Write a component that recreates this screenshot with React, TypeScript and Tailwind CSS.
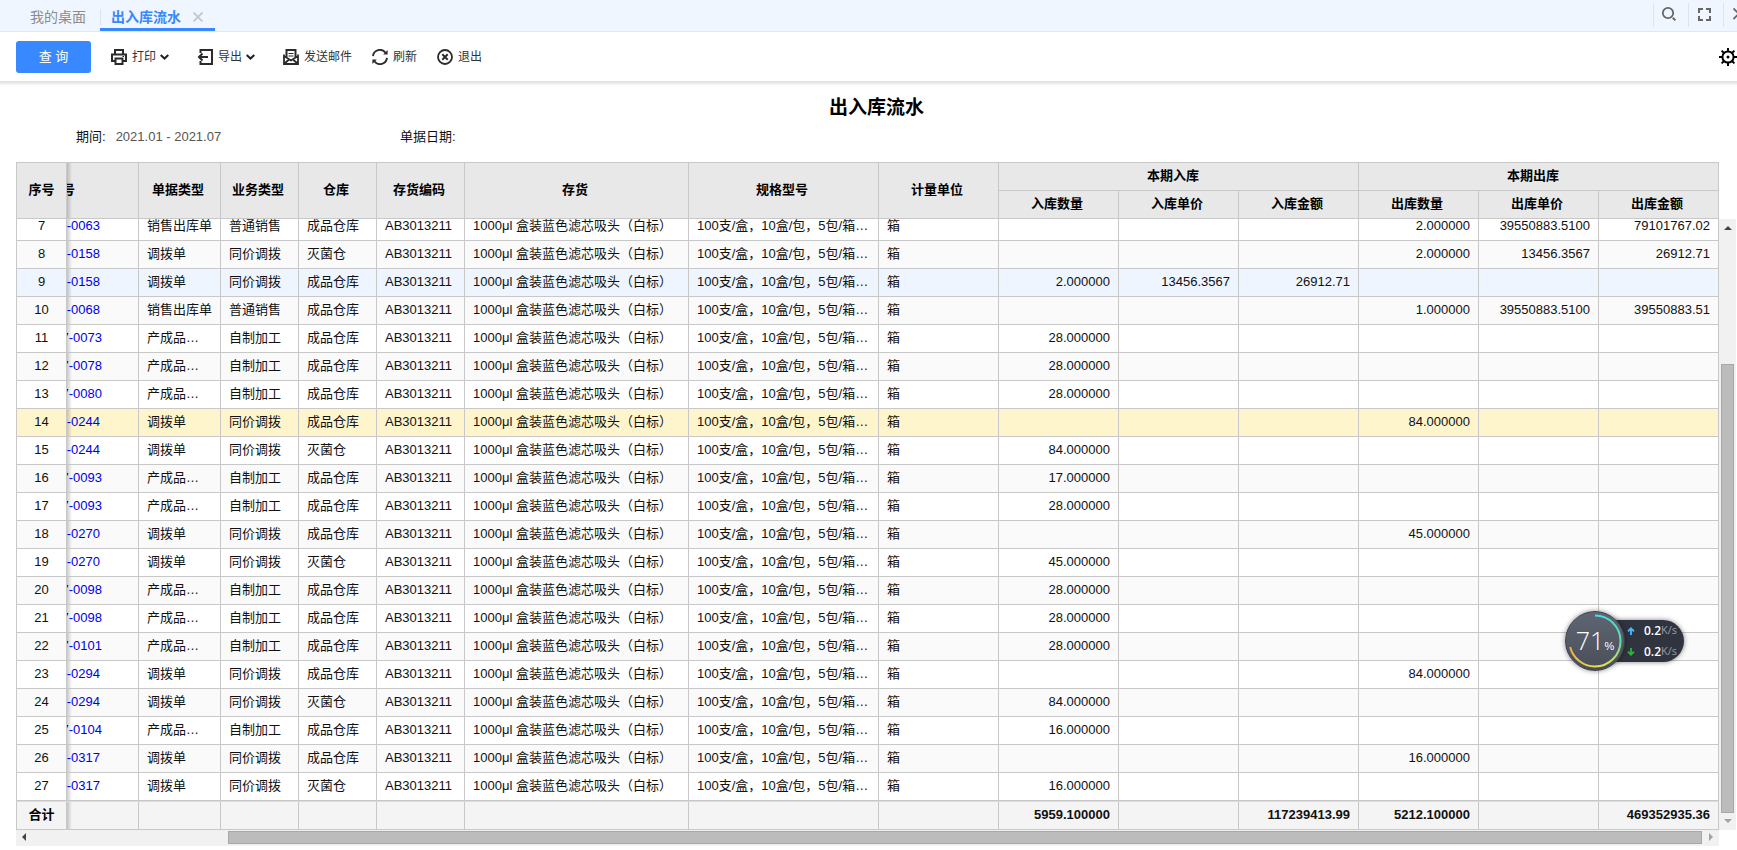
import React from "react";

type Row = {
  no: number;
  code: string;
  type: string;
  biz: string;
  store: string;
  nums: string[];
};

const SALE = ["销售出库单", "普通销售"];
const MOVE = ["调拨单", "同价调拨"];
const MADE = ["产成品入库单", "自制加工"];
const MAIN = "成品仓库";
const STERILE = "灭菌仓";

function row(no: number, code: string, kind: string[], store: string, ...nums: string[]): Row {
  return { no, code, type: kind[0], biz: kind[1], store, nums };
}

function inbound(qty: string, price = "", amount = "") {
  return [qty, price, amount, "", "", ""];
}

function outbound(qty: string, price = "", amount = "") {
  return ["", "", "", qty, price, amount];
}

const rows: Row[] = [
  row(7, "-0063", SALE, MAIN, ...outbound("2.000000", "39550883.5100", "79101767.02")),
  row(8, "-0158", MOVE, STERILE, ...outbound("2.000000", "13456.3567", "26912.71")),
  row(9, "-0158", MOVE, MAIN, ...inbound("2.000000", "13456.3567", "26912.71")),
  row(10, "-0068", SALE, MAIN, ...outbound("1.000000", "39550883.5100", "39550883.51")),
  row(11, "7-0073", MADE, MAIN, ...inbound("28.000000")),
  row(12, "7-0078", MADE, MAIN, ...inbound("28.000000")),
  row(13, "7-0080", MADE, MAIN, ...inbound("28.000000")),
  row(14, "-0244", MOVE, MAIN, ...outbound("84.000000")),
  row(15, "-0244", MOVE, STERILE, ...inbound("84.000000")),
  row(16, "7-0093", MADE, MAIN, ...inbound("17.000000")),
  row(17, "7-0093", MADE, MAIN, ...inbound("28.000000")),
  row(18, "-0270", MOVE, MAIN, ...outbound("45.000000")),
  row(19, "-0270", MOVE, STERILE, ...inbound("45.000000")),
  row(20, "7-0098", MADE, MAIN, ...inbound("28.000000")),
  row(21, "7-0098", MADE, MAIN, ...inbound("28.000000")),
  row(22, "7-0101", MADE, MAIN, ...inbound("28.000000")),
  row(23, "-0294", MOVE, MAIN, ...outbound("84.000000")),
  row(24, "-0294", MOVE, STERILE, ...inbound("84.000000")),
  row(25, "7-0104", MADE, MAIN, ...inbound("16.000000")),
  row(26, "-0317", MOVE, MAIN, ...outbound("16.000000")),
  row(27, "-0317", MOVE, STERILE, ...inbound("16.000000")),
];

const totals = ["5959.100000", "", "117239413.99", "5212.100000", "", "469352935.36"];

const TABLE = "w-full table-fixed border-separate border-spacing-0 border-l border-[#c8c8c8] text-[13px] leading-5 text-[#111]";
const BOX = "h-7 overflow-hidden border-r border-b border-[#c8c8c8] pt-0 pb-px whitespace-nowrap";
const CELL = BOX + " px-2";
const HEAD = BOX + " font-bold text-black";
const PINNED_SHADE = "bg-[linear-gradient(to_right,rgba(0,0,0,0.2),transparent_5px)]";

function Columns() {
  return (
    <colgroup>
      <col className="w-[50px]" />
      <col className="w-[72px]" />
      <col className="w-[82px]" />
      <col className="w-[78px]" />
      <col className="w-[78px]" />
      <col className="w-[88px]" />
      <col className="w-[224px]" />
      <col className="w-[190px]" />
      <col className="w-[120px]" />
      <col />
      <col />
      <col />
      <col />
      <col />
      <col />
    </colgroup>
  );
}

function rowColor(r: Row) {
  if (r.no === 14) return "bg-[#fff5cc]";
  if (r.no === 9) return "bg-[#eef5ff]";
  return r.no % 2 ? "bg-white" : "bg-[#fafafa]";
}

function Chevron() {
  return (
    <svg className="ml-1 h-2 w-[9px]" viewBox="0 0 9 8" fill="none" stroke="#222" strokeWidth="2">
      <path d="M0.7 2 4.5 5.6 8.3 2" />
    </svg>
  );
}

function ToolButton({ icon, label, menu }: { icon: React.ReactNode; label: string; menu?: boolean }) {
  return (
    <button type="button" className="flex items-center text-xs text-[#333]">
      <svg className="mr-[5px] size-4" viewBox="0 0 16 16" fill="none" stroke="#2b2b2b" strokeWidth="2">
        {icon}
      </svg>
      {label}
      {menu && <Chevron />}
    </button>
  );
}

function TopBar() {
  return (
    <header className="flex h-8 shrink-0 justify-between overflow-hidden border-b border-[#e1e7f2] bg-[#f0f6ff]">
      <nav className="flex pl-[30px] text-sm">
        <a href="#desktop" className="flex items-center pt-[3px] pr-3.5 text-[#8c8c8c]">我的桌面</a>
        <div className="flex items-center gap-3 border-b-[3px] border-[#3888ff] pr-3 pt-[6px]">
          <a href="#flow" className="flex h-4 items-center border-l border-[#dfe3ea] pl-2.5 font-bold text-[#3888ff]">出入库流水</a>
          <button type="button" aria-label="关闭">
            <svg className="size-2.5" viewBox="0 0 10 10" fill="none" stroke="#c4c7cc" strokeWidth="1.8">
              <path d="M0.5 0.5 9.5 9.5M9.5 0.5 0.5 9.5" />
            </svg>
          </button>
        </div>
      </nav>
      <div className="flex h-[27px] pt-[3px]">
        <button type="button" aria-label="搜索" className="w-[35px] border-l border-[#dfe5f0] pb-0.5 pl-[7px]">
          <svg className="size-4" viewBox="0 0 16 16" fill="none" stroke="#666" strokeWidth="1.8">
            <circle cx="7" cy="7" r="5.2" />
            <path d="M11.8 11.8 14.4 14.4" strokeWidth="2" />
          </svg>
        </button>
        <button type="button" aria-label="全屏" className="w-[35px] border-l border-[#dfe5f0] pb-0.5 pl-[7px]">
          <svg className="size-4" viewBox="0 0 16 16" fill="none" stroke="#666" strokeWidth="2">
            <path d="M3 7V3H7M10 3H14V7M14 10V14H10M7 14H3V10" />
          </svg>
        </button>
        <button type="button" aria-label="关闭全部" className="w-3.5 overflow-hidden border-l border-[#dfe5f0] pb-0.5 pl-[9px]">
          <svg className="h-4 w-3 max-w-none" viewBox="0 0 12 16" fill="none" stroke="#666" strokeWidth="1.8">
            <path d="M0.5 2.5 11 13M11 2.5 0.5 13" />
          </svg>
        </button>
      </div>
    </header>
  );
}

function Toolbar() {
  return (
    <div className="flex h-[50px] shrink-0 items-center overflow-hidden border-b border-[#e2e2e2] bg-white">
      <button type="button" className="ml-4 h-8 w-[75px] rounded-[3px] bg-[#3888ff] text-[13px] text-white">查 询</button>
      <div className="ml-5 flex">
        <div className="w-[86px]">
          <ToolButton label="打印" menu icon={<><path d="M4 5V1H12V5M4.5 12H1V5.5H15V12H11.5" /><path d="M4.5 9.5H11.5V15H4.5Z" /><path d="M11.5 7.5H13" strokeWidth="1" /></>} />
        </div>
        <div className="w-[86px]">
          <ToolButton label="导出" menu icon={<><path d="M3.5 4V1H15V15H3.5V12" /><path d="M11 8H2M5.5 4.5 2 8 5.5 11.5" /></>} />
        </div>
        <div className="flex gap-5">
          <ToolButton label="发送邮件" icon={<><path d="M3.5 8V1H12.5V8" /><path d="M1 5.5V15H15V5.5M1 7 8 11.5 15 7M1.5 14.5 6 10.5M14.5 14.5 10 10.5" strokeWidth="1.8" /><path d="M5.5 4.5H10.5M5.5 7H10.5" strokeWidth="1.2" /></>} />
          <ToolButton label="刷新" icon={<><path d="M1 7.2A7 7 0 0 1 13.6 3.8M15 8.8A7 7 0 0 1 2.4 12.2" strokeWidth="1.9" /><path d="M15.6 1V5.4H11.2ZM0.4 15V10.6H4.8Z" fill="#2b2b2b" stroke="none" /></>} />
          <ToolButton label="退出" icon={<><circle cx="8" cy="8" r="7" strokeWidth="1.8" /><path d="M5.3 5.3 10.7 10.7M10.7 5.3 5.3 10.7" /></>} />
        </div>
      </div>
      <button type="button" aria-label="设置" className="ml-auto h-[18px] w-[18px] overflow-hidden">
        <svg className="size-[18px] max-w-none" viewBox="0 0 18 18" fill="none" stroke="#000" strokeWidth="2">
          <circle cx="9" cy="9" r="5.6" />
          <path d="M9 0V3M9 15V18M0 9H3M15 9H18M2.6 2.6 4.8 4.8M13.2 13.2 15.4 15.4M2.6 15.4 4.8 13.2M13.2 4.8 15.4 2.6" />
          <circle cx="9" cy="9" r="1.5" fill="#000" stroke="none" />
        </svg>
      </button>
    </div>
  );
}

function HeadTable() {
  return (
    <table className={TABLE + " shrink-0 border-t bg-[#e8e8e8]"}>
      <Columns />
      <thead>
        <tr>
          <th rowSpan={2} className={HEAD + " px-0"}>序号</th>
          <th rowSpan={2} className={HEAD + " px-0 " + PINNED_SHADE}>
            <span className="flex w-2 justify-end overflow-hidden">号</span>
          </th>
          {["单据类型", "业务类型", "仓库", "存货编码", "存货", "规格型号", "计量单位"].map((h) => (
            <th key={h} rowSpan={2} className={HEAD + " pr-[3px] pl-0"}>{h}</th>
          ))}
          <th colSpan={3} className={HEAD + " pr-[11px] pl-0"}>本期入库</th>
          <th colSpan={3} className={HEAD + " pr-[11px] pl-0"}>本期出库</th>
        </tr>
        <tr>
          {["入库数量", "入库单价", "入库金额", "出库数量", "出库单价", "出库金额"].map((h) => (
            <th key={h} className={HEAD + " pr-[3px] pl-0"}>{h}</th>
          ))}
        </tr>
      </thead>
    </table>
  );
}

function BodyTable() {
  return (
    <div className="flex min-h-0 flex-1 flex-col justify-end overflow-hidden">
      <table className={TABLE}>
        <Columns />
        <tbody>
          {rows.map((r) => (
            <tr key={r.no} className={rowColor(r)}>
              <td className={CELL + " text-center"}>{r.no}</td>
              <td className={BOX + " px-0 " + PINNED_SHADE}>
                <a href={"#row" + r.no} className={"flex justify-end overflow-hidden text-[#0000e6] " + (r.code.length > 5 ? "w-[35px]" : "w-[33px]")}>{r.code}</a>
              </td>
              <td className={CELL}><div className="truncate">{r.type}</div></td>
              <td className={CELL}>{r.biz}</td>
              <td className={CELL}>{r.store}</td>
              <td className={CELL}>AB3013211</td>
              <td className={CELL}>1000μl 盒装蓝色滤芯吸头（白标）</td>
              <td className={CELL}><div className="truncate">100支/盒，10盒/包，5包/箱，白色标签</div></td>
              <td className={CELL}>箱</td>
              {r.nums.map((n, i) => (
                <td key={i} className={CELL + " text-right"}>{n}</td>
              ))}
            </tr>
          ))}
        </tbody>
      </table>
    </div>
  );
}

function TotalTable() {
  return (
    <table className={TABLE + " shrink-0 border-t border-t-[#dcdcdc] bg-[#f4f4f4] font-bold"}>
      <Columns />
      <tfoot>
        <tr>
          <th className={HEAD + " px-0"}>合计</th>
          <td className={CELL + " " + PINNED_SHADE} />
          {[2, 3, 4, 5, 6, 7, 8].map((i) => (
            <td key={i} className={CELL} />
          ))}
          {totals.map((t, i) => (
            <td key={i} className={CELL + " text-right"}>{t}</td>
          ))}
        </tr>
      </tfoot>
    </table>
  );
}

function HorizontalBar() {
  return (
    <div className="flex h-4 shrink-0 items-center bg-[#f1f1f1] px-1.5 pb-0.5">
      <svg className="h-2 w-1" viewBox="0 0 4 8" fill="#444"><path d="M4 0V8L0 4Z" /></svg>
      <div className="flex-[202]" />
      <div className="h-[13px] flex-[1474] border border-[#a8a8a8] bg-[#bcbcbc]" />
      <svg className="ml-[7px] h-2 w-1" viewBox="0 0 4 8" fill="#a3a3a3"><path d="M0 0V8L4 4Z" /></svg>
    </div>
  );
}

function VerticalBar() {
  return (
    <div className="mt-[57px] mb-4 flex w-[17px] flex-col items-center bg-[#f1f1f1] py-[7px]">
      <svg className="h-1 w-2" viewBox="0 0 8 4" fill="#444"><path d="M0 4H8L4 0Z" /></svg>
      <div className="flex-[134]" />
      <div className="w-[13px] flex-[449] border border-[#a8a8a8] bg-[#bcbcbc]" />
      <svg className="mt-1.5 h-1 w-2" viewBox="0 0 8 4" fill="#a3a3a3"><path d="M0 0H8L4 4Z" /></svg>
    </div>
  );
}

function SpeedLine({ up }: { up?: boolean }) {
  return (
    <div className="flex h-[21px] items-center">
      <svg className="mr-[9px] size-2" viewBox="0 0 8 8" fill="none" stroke={up ? "#4db8ff" : "#2fb344"} strokeWidth="1.8">
        <path d={up ? "M4 8V1.5M1 4.3 4 1.3 7 4.3" : "M4 0V6.5M1 3.7 4 6.7 7 3.7"} />
      </svg>
      <span className="font-['Open_Sans',sans-serif] text-xs font-semibold text-white">0.2</span>
      <span className="font-['Open_Sans',sans-serif] text-[11px] text-[#9a9ca6]">K/s</span>
    </div>
  );
}

function SpeedWidget() {
  return (
    <div className="absolute right-[53px] bottom-[179px] flex h-[60px] w-[119px] items-center">
      <div className="ml-[30px] h-[42px] flex-1 rounded-r-full bg-[#30343e] pl-8 shadow-[0_0_5px_rgba(0,0,0,0.5)]">
        <SpeedLine up />
        <SpeedLine />
      </div>
      <div className="absolute left-0 flex size-[60px] items-center justify-center rounded-full border border-[#3c404b] bg-[linear-gradient(#5f6572,#4a4e5b)] shadow-[0_0_5px_rgba(0,0,0,0.45)]">
        <svg className="absolute size-[58px]" viewBox="0 0 58 58" fill="none" strokeWidth="2">
          <defs>
            <linearGradient id="ringRight" gradientUnits="userSpaceOnUse" x1="29" y1="3" x2="29" y2="55">
              <stop offset="0" stopColor="#3fe0dc" />
              <stop offset="0.5" stopColor="#62dca5" />
              <stop offset="1" stopColor="#e8e04a" />
            </linearGradient>
            <linearGradient id="ringLeft" gradientUnits="userSpaceOnUse" x1="29" y1="54" x2="4" y2="35">
              <stop offset="0" stopColor="#e8e04a" />
              <stop offset="1" stopColor="#f2a93c" />
            </linearGradient>
          </defs>
          <path d="M29 3.5A25.5 25.5 0 0 1 29 54.5" stroke="url(#ringRight)" />
          <path d="M29 54.5A25.5 25.5 0 0 1 4.2 35" stroke="url(#ringLeft)" />
        </svg>
        <span className="font-['Open_Sans','Noto_Sans',sans-serif] text-[25px] font-light text-white">71</span>
        <span className="mt-2.5 text-[11px] text-white">%</span>
      </div>
    </div>
  );
}

export default function App() {
  return (
    <div className="relative flex h-screen flex-col overflow-hidden bg-white font-['Liberation_Sans','Noto_Sans_CJK_SC',sans-serif]">
      <TopBar />
      <Toolbar />
      <div className="h-1 shrink-0 bg-[linear-gradient(#e4e4e4,#fff)]" />
      <main className="flex min-h-0 flex-1 flex-col pb-1 pl-4">
        <h1 className="pt-2 text-center text-[19px] leading-7 font-bold text-black">出入库流水</h1>
        <div className="flex h-10 shrink-0 pt-[5px] pl-[60px] text-[13px] leading-5">
          <div className="flex w-[324px] gap-2.5">
            <span className="text-[#111]">期间:</span>
            <span className="text-[#555]">2021.01 - 2021.07</span>
          </div>
          <span className="text-[#111]">单据日期:</span>
        </div>
        <div className="flex min-h-0 flex-1 pr-px">
          <div className="flex min-w-0 flex-1 flex-col">
            <HeadTable />
            <BodyTable />
            <TotalTable />
            <HorizontalBar />
          </div>
          <VerticalBar />
        </div>
      </main>
      <SpeedWidget />
    </div>
  );
}
